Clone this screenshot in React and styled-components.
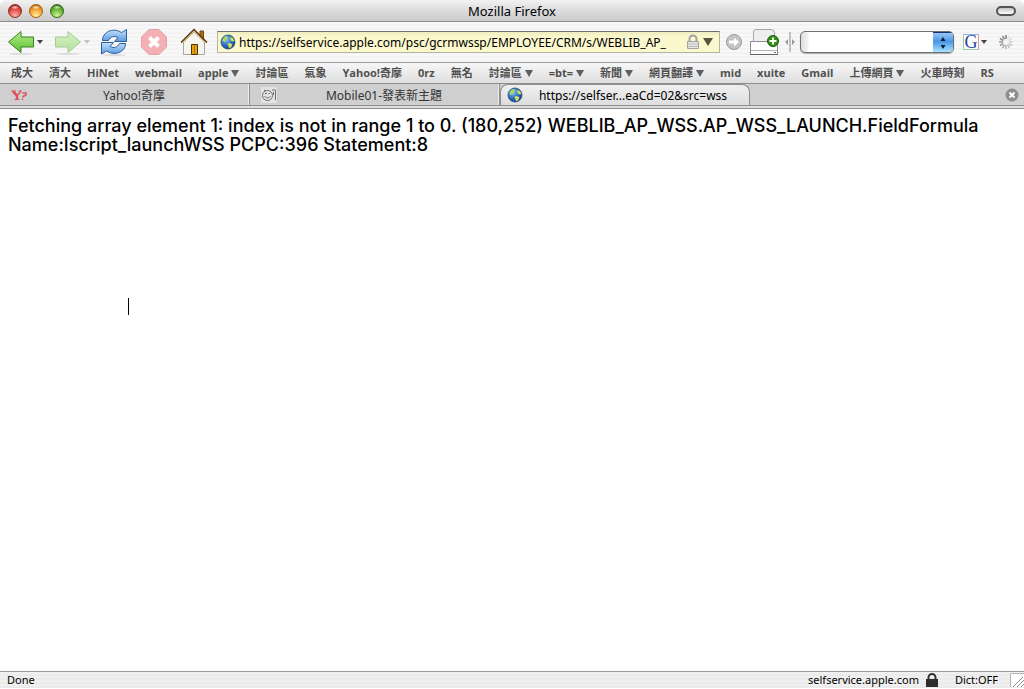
import React from 'react';
import styled, { createGlobalStyle, css } from 'styled-components';

const GlobalStyle = createGlobalStyle`
  * {
    box-sizing: border-box;
  }
  body {
    margin: 0;
    background: #fff;
  }
  button,
  input {
    margin: 0;
    padding: 0;
    border: 0;
    background: none;
    color: inherit;
    font: inherit;
  }
`;

const bookmarks = [
  { label: '成大' },
  { label: '清大' },
  { label: 'HiNet' },
  { label: 'webmail' },
  { label: 'apple', folder: true },
  { label: '討論區' },
  { label: '氣象' },
  { label: 'Yahoo!奇摩' },
  { label: '0rz' },
  { label: '無名' },
  { label: '討論區', folder: true },
  { label: '=bt=', folder: true },
  { label: '新聞', folder: true },
  { label: '網頁翻譯', folder: true },
  { label: 'mid' },
  { label: 'xuite' },
  { label: 'Gmail' },
  { label: '上傳網頁', folder: true },
  { label: '火車時刻' },
  { label: 'RS' },
];

/* ---------- icons ---------- */

const Arrow = ({ id, light, dark, edge, flip }) => (
  <svg width="28" height="28" viewBox="0 0 28 28" aria-hidden="true">
    <defs>
      <linearGradient id={id} x1="0" y1="0" x2="0" y2="1">
        <stop offset="0" stopColor={light} />
        <stop offset="1" stopColor={dark} />
      </linearGradient>
    </defs>
    <ellipse cx="14" cy="26" rx="12" ry="1" fill="#000" opacity=".1" />
    <path
      transform={flip ? 'translate(28 0) scale(-1 1)' : undefined}
      d="M1.500 14 14 3.500V9H26.500V19H14V24.500Z"
      fill={`url(#${id})`}
      stroke={edge}
      strokeLinejoin="round"
    />
  </svg>
);

const ReloadIcon = () => (
  <svg width="28" height="28" viewBox="0 0 28 28" aria-hidden="true">
    <defs>
      <linearGradient id="reload" x1="0" y1="0" x2="0" y2="1">
        <stop offset="0" stopColor="#c4e2fb" />
        <stop offset="1" stopColor="#5b9ae0" />
      </linearGradient>
    </defs>
    <ellipse cx="14" cy="27" rx="12" ry="1" fill="#000" opacity=".1" />
    <g fill="url(#reload)" stroke="#2b5f9e" strokeLinejoin="round">
      <path d="M2.500 12.500C2.500 4 13-1 21.500 4.500L26.500 1.500V13.500H14.500L18 9.500C14 7.500 10.500 8.500 8.500 12.500Z" />
      <path d="M25.500 15.500C25.500 24 15 28.500 6.500 23L1.500 26V14.500H13.500L10 18.500C14 20.500 17.500 19.500 19.500 15.500Z" />
    </g>
  </svg>
);

const StopIcon = () => (
  <svg width="28" height="28" viewBox="0 0 28 28" aria-hidden="true">
    <path d="M9 1.500H19L26.500 9V19L19 26.500H9L1.500 19V9Z" fill="#f4b0b4" stroke="#e0a0a4" strokeLinejoin="round" />
    <path d="M9.500 9.500 18.500 18.500M18.500 9.500 9.500 18.500" stroke="#fff" strokeWidth="4" />
  </svg>
);

const HomeIcon = () => (
  <svg width="28" height="28" viewBox="0 0 28 28" aria-hidden="true">
    <path d="M20 3H23.500V12L20 8Z" fill="#b46f12" stroke="#6e430c" />
    <path d="M3.500 14 14 3.500 24.500 14V26.500H3.500Z" fill="#f6f4ef" stroke="#a9a7a2" />
    <path d="M1 14.500 14 1.500 27 14.500" fill="none" stroke="#5c3a0e" strokeWidth="1.500" />
    <path d="M2.500 15 14 3.500 25.500 15" fill="none" stroke="#d9ad5c" />
    <path d="M11.500 16.500H17.500V26.500H11.500Z" fill="#e5a014" stroke="#4c3209" />
    <path d="M14.500 17V26" stroke="#b37406" />
  </svg>
);

const GlobeIcon = () => (
  <svg width="16" height="16" viewBox="0 0 16 16" aria-hidden="true">
    <defs>
      <radialGradient id="globe" cx=".35" cy=".3" r=".8">
        <stop offset="0" stopColor="#8fc8f6" />
        <stop offset=".5" stopColor="#2f74c4" />
        <stop offset="1" stopColor="#123a80" />
      </radialGradient>
    </defs>
    <circle cx="8" cy="8" r="7" fill="url(#globe)" stroke="#24497f" strokeWidth=".8" />
    <path d="M4 3 7 2 8 4 6.500 5.500 6 7 4 8 2.500 6.500Z" fill="#a9d65c" />
    <path d="M10 3 13 4 14.500 7 12 7.500 10.500 6Z" fill="#c7dd5a" />
    <path d="M7.500 9.500 10 9 12.500 10.500 11 13.500 9 14Z" fill="#d3e05a" />
  </svg>
);

const PaleLock = () => (
  <svg width="14" height="16" viewBox="0 0 14 16" aria-hidden="true">
    <path d="M3.500 8V5A3.500 3.500 0 0 1 10.500 5V8" fill="none" stroke="#a2a2a0" strokeWidth="2" />
    <path d="M1.500 7.500H12.500V14.500H1.500Z" fill="#e6e6e2" stroke="#a2a2a0" />
    <path d="M2 10H12M2 12.500H12" stroke="#bcbcb8" />
  </svg>
);

const DarkLock = () => (
  <svg width="12" height="14" viewBox="0 0 12 14" aria-hidden="true">
    <path d="M2.500 7V4.500A3.500 3.500 0 0 1 9.500 4.500V7" fill="none" stroke="#333" strokeWidth="2" />
    <path d="M0 6H12V14H0Z" fill="#2d2d2d" />
  </svg>
);

const GoIcon = () => (
  <svg width="18" height="18" viewBox="0 0 18 18" aria-hidden="true">
    <circle cx="9" cy="9" r="7.500" fill="#c4c4c4" stroke="#9b9b9b" />
    <path d="M4 7.500H9V4.500L14 9 9 13.500V10.500H4Z" fill="#fff" />
  </svg>
);

const DriveIcon = () => (
  <svg width="30" height="28" viewBox="0 0 30 28" aria-hidden="true">
    <path d="M4.500 13V4Q4.500 1.500 7 1.500H22Q25.500 1.500 25.500 5V13" fill="#eee" stroke="#a5a5a5" />
    <path d="M1.500 13.500H28.500V26.500H1.500Z" fill="#fdfdfd" stroke="#8e8e8e" />
    <path d="M2 22.500H28" stroke="#b5b5b5" />
    <path d="M1 26.500H29" stroke="#666" />
    <path d="M25 24.500H27" stroke="#666" />
    <circle cx="24" cy="13" r="5.500" fill="#2f8f11" stroke="#1b5f08" />
    <path d="M24 9.500V16.500M20.500 13H27.500" stroke="#fff" strokeWidth="2" />
  </svg>
);

const SplitterIcon = () => (
  <svg width="10" height="20" viewBox="0 0 10 20" aria-hidden="true">
    <path d="M5 0V20" stroke="#8a8a8a" />
    <path d="M3 7V13L0 10ZM7 7V13L10 10Z" fill="#9a9a9a" />
  </svg>
);

const StepperIcon = () => (
  <svg width="8" height="14" viewBox="0 0 8 14" aria-hidden="true">
    <path d="M4 1 6.500 5H1.500ZM4 13 6.500 9H1.500Z" fill="#0a1c38" />
  </svg>
);

const Throbber = () => (
  <svg width="16" height="16" viewBox="0 0 16 16" aria-hidden="true">
    {[...Array(12)].map((_, i) => (
      <path
        key={i}
        d="M8 1V5"
        stroke="#6c6c6c"
        strokeWidth="1.500"
        opacity={0.12 + ((i + 11) % 12) * 0.07}
        transform={`rotate(${i * 30} 8 8)`}
      />
    ))}
  </svg>
);

const YahooIcon = () => (
  <svg width="16" height="12" viewBox="0 0 16 12" aria-hidden="true">
    <g fill="none" stroke="#dd5157">
      <path d="M2 2.500 6 6.500V10" strokeWidth="2.500" />
      <path d="M10 2.500 6 6.500" strokeWidth="1.500" />
      <path d="M0 2H5M7.500 2H11M3.500 10.500H8.500" />
      <path d="M11.500 4H15V6L12 7.500V8.500M11.500 9.500V11" strokeWidth="1.500" />
    </g>
  </svg>
);

const MobileIcon = () => (
  <svg width="16" height="16" viewBox="0 0 16 16" aria-hidden="true">
    <path d="M0 0H16V16H0Z" fill="#e2e2e2" />
    <g fill="none" stroke="#6f6f6f">
      <circle cx="6.500" cy="8.500" r="5" />
      <path d="M3.500 9Q6.500 13 9.500 9M4 6.500H6M7.500 6.500H9M3 3 5 4M11 3H14.500V13M12.500 5V8" />
    </g>
  </svg>
);

const CloseIcon = () => (
  <svg width="14" height="14" viewBox="0 0 14 14" aria-hidden="true">
    <circle cx="7" cy="7" r="6.500" fill="#8e8e8e" />
    <path d="M4.500 4.500 9.500 9.500M9.500 4.500 4.500 9.500" stroke="#fff" strokeWidth="2" />
  </svg>
);

const GripIcon = () => (
  <svg width="14" height="14" viewBox="0 0 14 14" aria-hidden="true">
    <path d="M0 0H14V14H0Z" fill="#fff" />
    <path d="M.5 14V.5H14" fill="none" stroke="#b4b4b4" />
    <path d="M3 14 13 4M7 14 14 7M11 14 14 11" stroke="#8a8a8a" />
  </svg>
);

/* ---------- window ---------- */

const App = () => {
  return (
    <Window>
      <GlobalStyle />
      <TitleBar>
        <Lights>
          <Light aria-label="Close" $top="#8e2520" $mid="#d9433d" $low="#ffb3a8" />
          <Light aria-label="Minimize" $top="#a85a10" $mid="#f0982a" $low="#fff39a" />
          <Light aria-label="Zoom" $top="#2f6a17" $mid="#5fae31" $low="#d3f79a" />
        </Lights>
        <Title>Mozilla Firefox</Title>
        <Pill aria-label="Toggle toolbar" />
      </TitleBar>

      <Toolbar>
        <NavButtons>
          <NavPair>
            <ToolButton aria-label="Back">
              <Arrow id="back" light="#b9ec8c" dark="#56c22c" edge="#3b7f22" />
            </ToolButton>
            <Triangle $size={3} $color="#444" />
          </NavPair>
          <NavPair>
            <ToolButton aria-label="Forward">
              <Arrow id="forward" light="#d6f2c2" dark="#b2e19c" edge="#a5cb97" flip />
            </ToolButton>
            <Triangle $size={3} $color="#c4c4c4" />
          </NavPair>
          <ToolButton aria-label="Reload">
            <ReloadIcon />
          </ToolButton>
          <ToolButton aria-label="Stop">
            <StopIcon />
          </ToolButton>
          <ToolButton aria-label="Home">
            <HomeIcon />
          </ToolButton>
        </NavButtons>
        <LocationBar>
          <GlobeIcon />
          <LocationInput
            aria-label="Location"
            defaultValue="https://selfservice.apple.com/psc/gcrmwssp/EMPLOYEE/CRM/s/WEBLIB_AP_"
          />
          <PaleLock />
          <Triangle $size={5} $color="#55543f" />
        </LocationBar>
        <Tools>
          <ToolButton aria-label="Go">
            <GoIcon />
          </ToolButton>
          <ToolButton aria-label="Add bookmark">
            <DriveIcon />
          </ToolButton>
          <SplitterIcon />
        </Tools>
        <SearchBox>
          <SearchInput aria-label="Search" />
          <Stepper aria-label="Search engines">
            <StepperIcon />
          </Stepper>
        </SearchBox>
        <GoogleButton aria-label="Google">
          <GoogleMark>G</GoogleMark>
          <Triangle $size={3} $color="#444" />
        </GoogleButton>
        <Throbber />
      </Toolbar>

      <BookmarkBar>
        {bookmarks.map(({ label, folder }, i) =>
          folder ? (
            <Bookmark as="button" key={i}>
              {label}
              <Triangle $size={4} $color="#5e5e5e" />
            </Bookmark>
          ) : (
            <Bookmark href="#" key={i}>
              {label}
            </Bookmark>
          )
        )}
      </BookmarkBar>

      <TabBar>
        <Tab>
          <YahooIcon />
          <TabLabel>Yahoo!奇摩</TabLabel>
        </Tab>
        <Tab>
          <MobileIcon />
          <TabLabel>Mobile01-發表新主題</TabLabel>
        </Tab>
        <Tab $active>
          <GlobeIcon />
          <TabLabel>https://selfser...eaCd=02&amp;src=wss</TabLabel>
        </Tab>
        <TabClose aria-label="Close tab">
          <CloseIcon />
        </TabClose>
      </TabBar>
      <TabBase />

      <Page>
        <Message>
          Fetching array element 1: index is not in range 1 to 0. (180,252) WEBLIB_AP_WSS.AP_WSS_LAUNCH.FieldFormula
          <br />
          Name:Iscript_launchWSS PCPC:396 Statement:8
        </Message>
        <Caret />
      </Page>

      <StatusBar>
        <Status>Done</Status>
        <span>selfservice.apple.com</span>
        <DarkLock />
        <Dict>Dict:OFF</Dict>
        <GripIcon />
      </StatusBar>
    </Window>
  );
};

const Window = styled.div`
  display: flex;
  flex-direction: column;
  min-height: 100vh;
  padding-bottom: 1px;
  background: #fff;
  color: #000;
  font-family: 'Noto Sans', 'Noto Sans CJK TC', sans-serif;
  font-size: 12px;
`;

const TitleBar = styled.header`
  display: grid;
  grid-template-columns: 1fr auto 1fr;
  align-items: center;
  height: 22px;
  padding: 0 8px;
  border-bottom: 1px solid #8c8c8c;
  border-radius: 6px 6px 0 0;
  background: linear-gradient(#f2f2f2, #e0e0e0 40%, #cacaca);
`;

const Lights = styled.div`
  display: flex;
  gap: 7px;
`;

const Light = styled.button`
  width: 14px;
  height: 14px;
  border: 1px solid ${(props) => props.$top};
  border-radius: 50%;
  background:
    radial-gradient(ellipse 4px 2px at 50% 20%, #fffc, #fff0),
    radial-gradient(circle at 50% 90%, ${(props) => props.$low}, ${(props) => props.$mid} 60%, ${(props) => props.$top});
`;

const Title = styled.span`
  font-size: 13px;
  line-height: 20px;
`;

const Pill = styled.button`
  justify-self: end;
  width: 20px;
  height: 10px;
  border: 2px solid #555;
  border-radius: 5px;
  background: linear-gradient(#c4c4c4, #fff);
`;

const Toolbar = styled.div`
  display: flex;
  align-items: center;
  height: 41px;
  padding: 0 10px 0 7px;
  border-bottom: 1px solid #a0a0a0;
  background: repeating-linear-gradient(#f8f8f8 0 2px, #f3f3f3 2px 4px);
`;

const NavButtons = styled.div`
  display: flex;
  align-items: center;
  gap: 12px;
  margin-right: 9px;
`;

const NavPair = styled.div`
  display: flex;
  align-items: center;
  gap: 2px;

  & + & {
    margin: 0 -2px 0 -1px;
  }
`;

const ToolButton = styled.button`
  display: flex;
`;

const Triangle = styled.span`
  flex: none;
  border: solid transparent;
  border-width: ${(props) => props.$size + (props.$size > 3 ? 3 : 1)}px ${(props) => props.$size}px 0;
  border-top-color: ${(props) => props.$color};
`;

const LocationBar = styled.div`
  display: flex;
  flex: 1;
  align-items: center;
  gap: 3px;
  min-width: 0;
  height: 22px;
  padding: 0 6px 0 2px;
  border: 1px solid #b5b5a4;
  border-top-color: #6e6e6e;
  background: linear-gradient(#efecc0, #fbf8cd 5px);
`;

const LocationInput = styled.input`
  flex: 1;
  min-width: 0;
  height: 20px;
  outline: none;
`;

const Tools = styled.div`
  display: flex;
  align-items: center;
  gap: 6px;
  margin: 0 5px;
`;

const SearchBox = styled.div`
  display: flex;
  width: 154px;
  height: 22px;
  border: 1px solid #6f6f6f;
  border-radius: 5px;
  background: linear-gradient(90deg, #ddd, #f4f4f4 7px, #fff 8px);
  box-shadow: 0 1px 1px #aaa;
  overflow: hidden;
`;

const SearchInput = styled.input`
  flex: 1;
  min-width: 0;
  padding: 0 8px;
  outline: none;
`;

const Stepper = styled.button`
  display: flex;
  align-items: center;
  justify-content: center;
  width: 20px;
  border-top: 1px solid #14307c;
  background: linear-gradient(#9cc6f2, #4b97e6 45%, #a8e2ff);
`;

const GoogleButton = styled.button`
  display: flex;
  align-items: center;
  gap: 2px;
  margin: 0 11px 0 9px;
`;

const GoogleMark = styled.span`
  width: 16px;
  height: 16px;
  border: 1px solid;
  border-color: #8fb0ee #e79a96 #94cf94 #94cf94;
  background: #fff;
  color: #2447a5;
  font-family: 'Liberation Serif', serif;
  font-size: 18px;
  line-height: 14px;
  text-align: center;
`;

const BookmarkBar = styled.nav`
  display: flex;
  align-items: center;
  gap: 16px;
  height: 21px;
  padding: 0 11px;
  border-bottom: 1px solid #8e8e8e;
  background: linear-gradient(#f7f7f7, #dedede);
  color: #505050;
  font-family: 'Open Sans', 'Noto Sans CJK TC', sans-serif;
  font-size: 11px;
  font-weight: 700;
  line-height: 20px;
  white-space: nowrap;
  overflow: hidden;
`;

const Bookmark = styled.a`
  display: flex;
  flex: none;
  align-items: center;
  gap: 3px;
  color: inherit;
  text-decoration: none;
`;

const TabBar = styled.div`
  display: flex;
  height: 21px;
  background: #cfcfcf;
`;

const Tab = styled.button`
  display: flex;
  flex: 0 1 250px;
  align-items: center;
  min-width: 0;
  padding: 0 8px 0 11px;
  border-right: 1px solid #8e8e8e;
  box-shadow: inset -1px 0 #eee;
  color: #333;

  ${(props) =>
    props.$active &&
    css`
      padding: 0 6px;
      border: 1px solid #8e8e8e;
      border-bottom: 0;
      border-radius: 8px 8px 0 0;
      background: linear-gradient(#efefef, #dedede);
      box-shadow: none;
      color: #000;
    `}
`;

const TabLabel = styled.span`
  flex: 1;
  overflow: hidden;
  text-align: center;
  white-space: nowrap;
`;

const TabClose = styled.button`
  display: flex;
  align-items: center;
  margin-left: auto;
  padding-right: 5px;
`;

const TabBase = styled.div`
  height: 4px;
  border: solid #8e8e8e;
  border-width: 1px 0;
  background: #dedede;
`;

const Page = styled.main`
  position: relative;
  flex: 1;
  padding: 7px 8px;
`;

const Message = styled.p`
  margin: 0;
  font-family: Inter, 'Liberation Sans', sans-serif;
  font-size: 18px;
  font-weight: 500;
  line-height: 19px;
`;

const Caret = styled.span`
  position: absolute;
  top: 189px;
  left: 128px;
  width: 1px;
  height: 17px;
  background: #000;
`;

const StatusBar = styled.footer`
  display: flex;
  align-items: center;
  gap: 7px;
  height: 17px;
  padding-left: 7px;
  border-top: 1px solid #9a9a9a;
  background: repeating-linear-gradient(#f0f0f0 0 2px, #ebebeb 2px 4px);
  font-size: 11px;
  line-height: 16px;
`;

const Status = styled.span`
  flex: 1;
`;

const Dict = styled.span`
  padding: 0 5px 0 10px;
`;

export default App;
